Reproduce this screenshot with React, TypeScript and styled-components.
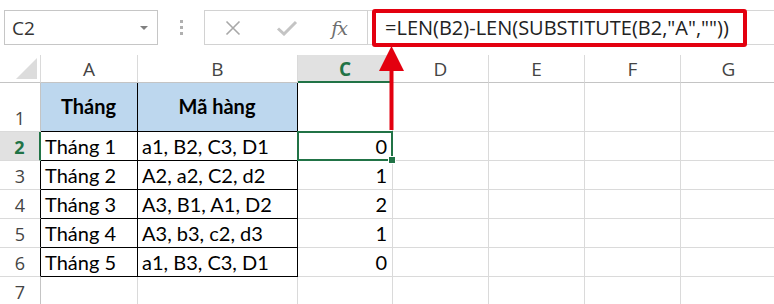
import React from "react";
import styled, { createGlobalStyle } from "styled-components";

const Global = createGlobalStyle`
  html, body { margin: 0; padding: 0; background: #fff; }
  body { width: 774px; height: 304px; overflow: hidden; }
`;

const Page = styled.div`
  position: relative;
  width: 774px;
  height: 304px;
  overflow: hidden;
  background: #fff;
`;

const Toolbar = styled.div`
  display: flex;
  align-items: center;
  height: 35px;
  padding-top: 10px;
  padding-bottom: 10px;
`;

const NameBox = styled.div`
  box-sizing: border-box;
  margin-left: 4px;
  width: 154px;
  height: 35px;
  border: 1px solid #c6c6c6;
  display: flex;
  align-items: center;
  justify-content: space-between;
  padding: 0 9px 0 7px;
  font-family: "Open Sans", "Noto Sans", sans-serif;
  font-size: 19px;
  color: #333;
`;

const Caret = styled.span`
  width: 0;
  height: 0;
  border-left: 4px solid transparent;
  border-right: 4px solid transparent;
  border-top: 4px solid #808080;
  margin-top: 1px;
`;

const Dots = styled.div`
  width: 46px;
  display: flex;
  flex-direction: column;
  align-items: center;
  gap: 3px;
  span {
    width: 3px;
    height: 3px;
    background: #b0b0b0;
  }
`;

const ButtonBox = styled.div`
  box-sizing: border-box;
  width: 164px;
  height: 35px;
  border: 1px solid #d2d2d2;
  display: flex;
  align-items: center;
  padding-left: 19px;
`;

const IconSlot = styled.div<{ $w: number }>`
  width: ${(p) => p.$w}px;
  display: flex;
  align-items: center;
  justify-content: center;
`;

const Fx = styled.span`
  font-family: "DejaVu Serif", "Liberation Serif", serif;
  font-style: italic;
  font-size: 19px;
  color: #6e6e6e;
  letter-spacing: -1px;
`;

const FormulaArea = styled.div`
  flex: 1;
  height: 35px;
  box-sizing: border-box;
  border-top: 1px solid #d6d6d6;
  border-bottom: 1px solid #d6d6d6;
  display: flex;
  align-items: center;
`;

const Highlight = styled.div`
  box-sizing: border-box;
  margin-left: 4px;
  width: 375px;
  height: 38px;
  border: 4px solid #e3000f;
  border-radius: 3px;
  display: flex;
  align-items: center;
  padding-left: 9px;
  font-family: "Open Sans", "Noto Sans", sans-serif;
  font-size: 20px;
  color: #222;
  white-space: nowrap;
`;

const Sheet = styled.div`
  display: grid;
  grid-template-columns: 41px 97px 160px 95px 96px 96px 96px 96px;
  grid-template-rows: 28px 49px repeat(6, 29px);
`;

const ColHead = styled.div<{ $active?: boolean }>`
  box-sizing: border-box;
  border-right: 1px solid #dadada;
  border-bottom: ${(p) => (p.$active ? "2px solid #217346" : "1px solid #c4c4c4")};
  background: ${(p) => (p.$active ? "#e1e1e1" : "#fff")};
  color: ${(p) => (p.$active ? "#217346" : "#444")};
  font-weight: ${(p) => (p.$active ? 700 : 400)};
  font-family: "Open Sans", "Noto Sans", sans-serif;
  font-size: 19px;
  display: flex;
  align-items: center;
  justify-content: center;
  padding-top: ${(p) => (p.$active ? 1 : 0)}px;
`;

const Corner = styled.div`
  box-sizing: border-box;
  border-right: 1px solid #dadada;
  border-bottom: 1px solid #c4c4c4;
  display: flex;
  align-items: flex-end;
  justify-content: flex-end;
  padding: 0 3px 3px 0;
`;

const Triangle = styled.span`
  width: 0;
  height: 0;
  border-left: 21px solid transparent;
  border-bottom: 21px solid #dcdcdc;
`;

const RowHead = styled.div<{ $active?: boolean; $edge?: string }>`
  box-sizing: border-box;
  border-bottom: 1px solid #dadada;
  border-right: ${(p) => (p.$active ? "2px solid #217346" : `1px solid ${p.$edge || "#c4c4c4"}`)};
  background: ${(p) => (p.$active ? "#e1e1e1" : "#fff")};
  color: ${(p) => (p.$active ? "#217346" : "#444")};
  font-weight: ${(p) => (p.$active ? 700 : 400)};
  font-family: "Open Sans", "Noto Sans", sans-serif;
  font-size: 18px;
  display: flex;
  align-items: flex-end;
  justify-content: center;
  padding-bottom: 1px;
`;

const Cell = styled.div<{
  $fill?: string;
  $bold?: boolean;
  $align?: "left" | "center" | "right";
  $right?: string;
  $bottom?: string;
  $middle?: boolean;
  $selected?: boolean;
}>`
  position: relative;
  box-sizing: border-box;
  background: ${(p) => p.$fill || "#fff"};
  border-right: 1px solid ${(p) => p.$right || "#dadada"};
  border-bottom: 1px solid ${(p) => p.$bottom || "#dadada"};
  font-family: Lato, "Open Sans", sans-serif;
  font-size: 20px;
  font-weight: ${(p) => (p.$bold ? 700 : 400)};
  color: #000;
  display: flex;
  align-items: ${(p) => (p.$middle ? "center" : "flex-end")};
  justify-content: ${(p) =>
    p.$align === "right" ? "flex-end" : p.$align === "center" ? "center" : "flex-start"};
  padding: 0 5px 2px 4px;
  white-space: nowrap;
  ${(p) =>
    p.$selected &&
    `
    &::after {
      content: "";
      position: absolute;
      left: -1px; top: -1px; right: -1px; bottom: -1px;
      border: 2px solid #217346;
    }
    &::before {
      content: "";
      position: absolute;
      right: -4px; bottom: -4px;
      width: 6px; height: 6px;
      background: #217346;
      border: 1px solid #fff;
      z-index: 2;
    }
  `}
`;

const Arrow = styled.svg`
  position: absolute;
  left: 377px;
  top: 46px;
  z-index: 5;
`;

const cols = ["A", "B", "C", "D", "E", "F", "G"];

const data: [string, string, string][] = [
  ["Tháng 1", "a1, B2, C3, D1", "0"],
  ["Tháng 2", "A2, a2, C2, d2", "1"],
  ["Tháng 3", "A3, B1, A1, D2", "2"],
  ["Tháng 4", "A3, b3, c2, d3", "1"],
  ["Tháng 5", "a1, B3, C3, D1", "0"],
];

function Blanks({ n }: { n: number }) {
  return (
    <>
      {Array.from({ length: n }).map((_, i) => (
        <Cell key={i} />
      ))}
    </>
  );
}

export default function App() {
  return (
    <Page>
      <Global />
      <Toolbar>
        <NameBox>
          <span>C2</span>
          <Caret />
        </NameBox>
        <Dots>
          <span />
          <span />
          <span />
        </Dots>
        <ButtonBox>
          <IconSlot $w={18}>
            <svg width="16" height="16" viewBox="0 0 16 16">
              <path d="M1.5 1.5 L14.5 14.5 M14.5 1.5 L1.5 14.5" stroke="#a8a8a8" strokeWidth="1.6" fill="none" />
            </svg>
          </IconSlot>
          <IconSlot $w={90}>
            <svg width="22" height="16" viewBox="0 0 22 16">
              <path d="M2 8.5 L8 14 L20 2" stroke="#c4c4c4" strokeWidth="3" fill="none" />
            </svg>
          </IconSlot>
          <IconSlot $w={14}>
            <Fx>fx</Fx>
          </IconSlot>
        </ButtonBox>
        <FormulaArea>
          <Highlight>=LEN(B2)-LEN(SUBSTITUTE(B2,"A",""))</Highlight>
        </FormulaArea>
      </Toolbar>

      <Sheet>
        <Corner>
          <Triangle />
        </Corner>
        {cols.map((c) => (
          <ColHead key={c} $active={c === "C"}>
            {c}
          </ColHead>
        ))}

        <RowHead>1</RowHead>
        <Cell $fill="#bdd7ee" $bold $align="center" $middle $right="#000" $bottom="#000">
          Tháng
        </Cell>
        <Cell $fill="#bdd7ee" $bold $align="center" $middle $right="#000" $bottom="#000">
          Mã hàng
        </Cell>
        <Blanks n={5} />

        {data.map((r, i) => (
          <React.Fragment key={i}>
            <RowHead $active={i === 0} $edge="#000">
              {i + 2}
            </RowHead>
            <Cell $right="#000" $bottom="#000">
              {r[0]}
            </Cell>
            <Cell $right="#000" $bottom="#000">
              {r[1]}
            </Cell>
            <Cell $align="right" $selected={i === 0}>
              {r[2]}
            </Cell>
            <Blanks n={4} />
          </React.Fragment>
        ))}

        <RowHead>7</RowHead>
        <Blanks n={7} />
      </Sheet>

      <Arrow width="30" height="84" viewBox="0 0 30 84">
        <polygon points="14.5,0 2,25 27,25" fill="#e3000f" />
        <rect x="12.5" y="24" width="4" height="60" fill="#e3000f" />
      </Arrow>
    </Page>
  );
}
